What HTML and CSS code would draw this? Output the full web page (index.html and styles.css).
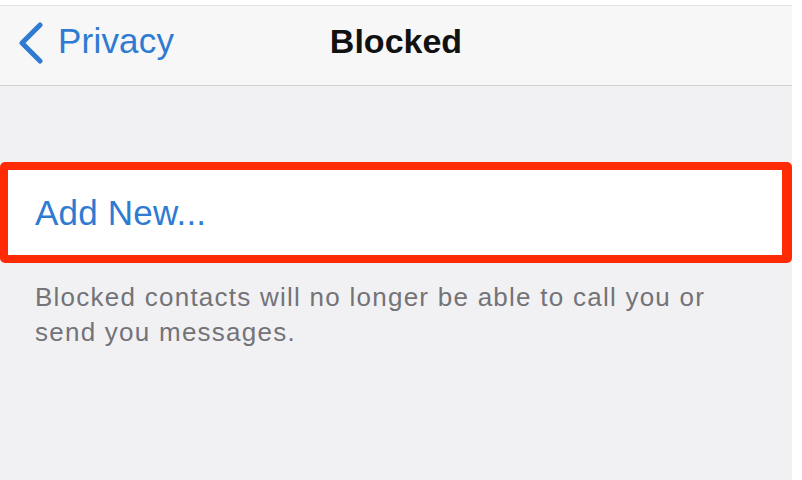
FILE: index.html
```html
<!DOCTYPE html>
<html lang="en">
<head>
<meta charset="utf-8">
<title>Blocked</title>
<link rel="stylesheet" href="styles.css">
</head>
<body>
<div class="screen">
  <div class="topline"></div>
  <header class="nav">
    <a class="back" href="#">
      <svg class="chev" width="27" height="42" viewBox="0 0 27 42" aria-hidden="true">
        <path d="M23 3 L5 21 L23 39" fill="none" stroke="#2f7bd2" stroke-width="5" stroke-linecap="round" stroke-linejoin="round"/>
      </svg>
      <span>Privacy</span>
    </a>
    <h1 class="title">Blocked</h1>
    <span></span>
  </header>
  <main class="content">
    <div class="cell">Add New...</div>
    <p class="footer">Blocked contacts will no longer be able to call you or send you messages.</p>
  </main>
</div>
</body>
</html>
```
FILE: styles.css
```css
html, body {
  margin: 0;
  padding: 0;
  background: #ffffff;
}
body {
  font-family: "Liberation Sans", Arial, sans-serif;
}
.screen {
  width: 792px;
  height: 480px;
  background: #f1f1f3;
  display: flex;
  flex-direction: column;
}
.topline {
  height: 5px;
  background: #ffffff;
  border-bottom: 1px solid #e4e4e4;
}
.nav {
  height: 69px;
  padding-bottom: 10px;
  background: #f7f7f7;
  border-bottom: 1px solid #d2d2d4;
  display: grid;
  grid-template-columns: 1fr auto 1fr;
  align-items: center;
}
.back {
  display: flex;
  align-items: center;
  gap: 14px;
  padding-left: 17px;
  color: #2f7bd2;
  text-decoration: none;
  font-size: 35px;
  line-height: 40px;
  letter-spacing: 0.2px;
}
.chev {
  display: block;
  margin-top: 4px;
}
.title {
  margin: 0;
  font-size: 34px;
  line-height: 40px;
  font-weight: 700;
  color: #111111;
}
.content {
  padding-top: 76px;
}
.cell {
  background: #ffffff;
  border: 8px solid #ff2a06;
  border-right-width: 10px;
  border-radius: 5px;
  padding: 23px 0 22px 27px;
  font-size: 35px;
  line-height: 40px;
  letter-spacing: 0.2px;
  color: #2f7bd2;
}
.footer {
  margin: 17px 0 0 0;
  padding: 0 60px 0 35px;
  font-size: 26px;
  line-height: 35px;
  letter-spacing: 1.25px;
  color: #737378;
}
```
